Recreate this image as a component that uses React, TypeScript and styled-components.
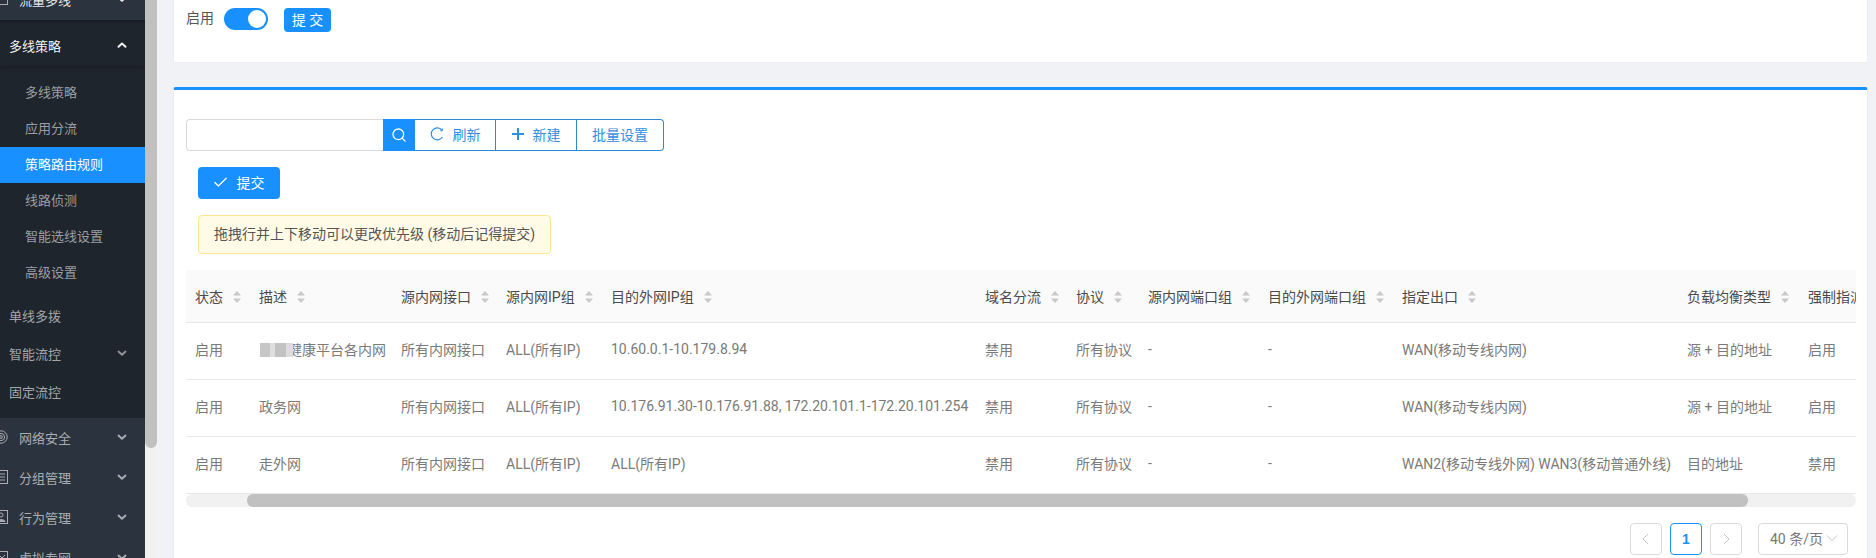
import React from "react";
import styled, { createGlobalStyle } from "styled-components";
import { Search, Check } from "lucide-react";

const Global = createGlobalStyle`
  html, body { margin: 0; padding: 0; height: 100%; overflow: hidden; background: #f0f2f5; }
  #root { height: 558px; overflow: hidden; }
  * { box-sizing: border-box; }
  body { font-family: Roboto, "Noto Sans CJK SC", sans-serif; font-size: 14px; color: #666; }
`;

const Page = styled.div`
  display: flex;
  width: 1876px;
  height: 558px;
  overflow: hidden;
`;

const Sidebar = styled.aside`
  width: 145px;
  flex: none;
  height: 558px;
  overflow: hidden;
  background: #2b333e;
  font-size: 13px;
  color: #a9acb0;
`;

const Nav = styled.nav`
  margin-top: -20px;
`;

const TopItem = styled.div<{ $white?: boolean }>`
  height: 40px;
  display: flex;
  align-items: center;
  padding: 0 18px 2px 0;
  color: ${(p) => (p.$white ? "#e6e7e9" : "#a9acb0")};
`;

const IconSlot = styled.span`
  width: 14px;
  height: 14px;
  margin-left: -6px;
  margin-right: 11px;
  flex: none;
  display: flex;
`;

const Label = styled.span`
  flex: 1;
  white-space: nowrap;
`;

const Expanded = styled.div`
  background: #1f252d;
  box-shadow: inset 0 3px 2px -1px #181c22;
  padding: 6px 0 7px;
`;

const GroupHeader = styled.div`
  height: 40px;
  display: flex;
  align-items: center;
  padding: 0 18px 2px 9px;
  color: #f2f2f2;
  box-shadow: 0 2px 3px rgba(0, 0, 0, 0.18);
`;

const SubList = styled.div`
  padding: 9px 0 6px;
`;

const SubItem = styled.div<{ $active?: boolean }>`
  height: 36px;
  display: flex;
  align-items: center;
  padding: 0 0 3px 25px;
  background: ${(p) => (p.$active ? "#1890ff" : "transparent")};
  color: ${(p) => (p.$active ? "#ffffff" : "#9b9ea2")};
`;

const PlainItem = styled.div`
  height: 38px;
  display: flex;
  align-items: center;
  padding: 0 18px 2px 9px;
  color: #a2a5a9;
`;

const SideTrack = styled.div`
  width: 12px;
  flex: none;
  height: 558px;
  background: #f1f1f1;
`;

const SideThumb = styled.div`
  height: 448px;
  background: #c1c1c1;
  border-radius: 0 0 6px 6px;
`;

const Main = styled.main`
  flex: 1;
  min-width: 0;
  padding: 0 8px 0 16px;
  background: #f0f2f5;
`;

const TopCard = styled.section`
  height: 63px;
  background: #fff;
  border: 1px solid #ebedf0;
  border-top: 0;
  padding: 7px 0 0 12px;
  display: flex;
  align-items: flex-start;
  margin-bottom: 24px;
`;

const FieldLabel = styled.span`
  line-height: 22px;
  margin-right: 10px;
  color: #555;
`;

const Switch = styled.span`
  width: 44px;
  height: 22px;
  margin-top: 1px;
  border-radius: 11px;
  background: #1890ff;
  display: flex;
  justify-content: flex-end;
  align-items: center;
  padding-right: 2px;
  margin-right: 16px;
`;

const Knob = styled.span`
  width: 18px;
  height: 18px;
  border-radius: 50%;
  background: #fff;
`;

const SmallPrimary = styled.button`
  width: 47px;
  height: 24px;
  margin-top: 1px;
  border: 0;
  padding: 0 0 2px;
  border-radius: 4px;
  background: #1890ff;
  color: #fff;
  font: inherit;
  white-space: pre;
`;

const Card = styled.section`
  height: 471px;
  background: #fff;
  border-top: 3px solid #1890ff;
  border-left: 1px solid #ebedf0;
  border-right: 1px solid #ebedf0;
  border-radius: 3px 3px 0 0;
  padding: 29px 11px 0 12px;
`;

const Toolbar = styled.div`
  display: flex;
  height: 32px;
`;

const SearchInput = styled.input`
  width: 197px;
  height: 32px;
  border: 1px solid #d9d9d9;
  border-right: 0;
  border-radius: 4px 0 0 4px;
  outline: none;
  padding: 0 8px;
  background: #fff;
`;

const SearchButton = styled.button`
  width: 32px;
  height: 32px;
  border: 0;
  padding: 0;
  background: #1890ff;
  color: #fff;
  display: flex;
  align-items: center;
  justify-content: center;
`;

const ToolButton = styled.button<{ $w: number; $last?: boolean }>`
  width: ${(p) => p.$w}px;
  height: 32px;
  background: #fff;
  border: 1px solid #2b8ad8;
  border-left: 0;
  border-radius: ${(p) => (p.$last ? "0 4px 4px 0" : "0")};
  color: #2f8fe0;
  font: inherit;
  padding: 0 0 2px;
  display: flex;
  align-items: center;
  justify-content: center;
  gap: 9px;
`;

const SubmitRow = styled.div`
  margin: 16px 0 0 12px;
`;

const SubmitButton = styled.button`
  width: 82px;
  height: 32px;
  background: #1890ff;
  border: 0;
  border-radius: 4px;
  color: #fff;
  font: inherit;
  padding: 0 2px 2px 0;
  display: flex;
  align-items: center;
  justify-content: center;
  gap: 8px;
`;

const Alert = styled.div`
  margin: 16px 0 16px 12px;
  width: 353px;
  height: 39px;
  background: #fffbe6;
  border: 1px solid #ffe58f;
  border-radius: 4px;
  padding: 0 0 3px 15px;
  display: flex;
  align-items: center;
  color: #555;
  white-space: nowrap;
`;

const TableWrap = styled.div`
  width: 1670px;
  overflow: hidden;
`;

const Table = styled.table`
  table-layout: fixed;
  width: 1733px;
  border-collapse: collapse;
`;

const HeadCell = styled.th`
  height: 52px;
  padding: 0 0 0 9px;
  background: #fafafa;
  border-bottom: 1px solid #e8e8e8;
  font-weight: 400;
  text-align: left;
  color: #4a4a4a;
  white-space: nowrap;
  overflow: hidden;
`;

const HeadInner = styled.span`
  display: inline-flex;
  align-items: center;
  gap: 10px;
`;

const SortMark = styled.svg`
  width: 8px;
  height: 12px;
  flex: none;
  margin-top: 2px;
`;

const Cell = styled.td`
  height: 57px;
  padding: 0 0 4px 9px;
  border-bottom: 1px solid #e8e8e8;
  color: #7a7a7a;
  white-space: nowrap;
  overflow: hidden;
`;

const Blur = styled.span`
  display: inline-block;
  width: 33px;
  height: 14px;
  margin: 0 -5px 0 1px;
  vertical-align: -2px;
  position: relative;
  z-index: 1;
  filter: blur(0.7px);
  background: linear-gradient(
    90deg,
    #c6c6c6 0 29%,
    #dedede 29% 46%,
    #c2c2c2 46% 78%,
    #dcdcdc 78% 100%
  );
`;

const HScroll = styled.div`
  width: 1670px;
  height: 13px;
  background: #f1f1f1;
  border-radius: 6px;
  padding-left: 61px;
`;

const HThumb = styled.div`
  width: 1501px;
  height: 13px;
  background: #c1c1c1;
  border-radius: 6px;
`;

const Pager = styled.div`
  display: flex;
  justify-content: flex-end;
  align-items: center;
  gap: 8px;
  margin-top: 16px;
  padding-right: 8px;
`;

const PageBtn = styled.div<{ $active?: boolean }>`
  width: 32px;
  height: 32px;
  border: 1px solid ${(p) => (p.$active ? "#1890ff" : "#d9d9d9")};
  border-radius: 4px;
  color: ${(p) => (p.$active ? "#1890ff" : "#c4c4c4")};
  display: flex;
  align-items: center;
  justify-content: center;
  font-family: "Liberation Sans", sans-serif;
  font-weight: 700;
  font-size: 14px;
`;

const PageSize = styled.div`
  width: 90px;
  height: 32px;
  margin-left: 8px;
  border: 1px solid #d9d9d9;
  border-radius: 4px;
  display: flex;
  align-items: center;
  justify-content: space-between;
  padding: 0 9px 2px 11px;
  color: #777;
  white-space: nowrap;
`;

const Chev = ({ up, color = "#a9acb0" }: { up?: boolean; color?: string }) => (
  <svg width="10" height="10" viewBox="0 0 10 10" fill="none" stroke={color} strokeWidth="2" strokeLinecap="round" strokeLinejoin="round">
    <path d={up ? "M1.5 6.8 5 3.6l3.5 3.2" : "M1.5 3.6 5 6.8l3.5-3.2"} />
  </svg>
);

const I = { fill: "none", stroke: "#a9acb0", strokeWidth: 1 };

const BoxIcon = () => (
  <svg width="14" height="14" viewBox="0 0 14 14" {...I}>
    <rect x="0.5" y="1.5" width="13" height="11" />
    <path d="M3 9.5 6 6l2 2 3-3" />
  </svg>
);
const ShieldIcon = () => (
  <svg width="14" height="14" viewBox="0 0 14 14" {...I}>
    <circle cx="7" cy="7" r="6.2" />
    <circle cx="7" cy="7" r="3.6" />
    <circle cx="7" cy="7" r="1.4" />
  </svg>
);
const ListIcon = () => (
  <svg width="14" height="14" viewBox="0 0 14 14" {...I}>
    <rect x="0.5" y="0.5" width="13" height="13" />
    <path d="M4 4h7M4 7h7M4 10h7" />
  </svg>
);
const BehaviorIcon = () => (
  <svg width="14" height="14" viewBox="0 0 14 14" {...I}>
    <rect x="0.5" y="0.5" width="13" height="13" />
    <circle cx="7" cy="5" r="2" />
    <path d="M3 11.5c0-2.5 8-2.5 8 0z" fill="#a9acb0" />
  </svg>
);

const Reload = () => (
  <svg width="14" height="14" viewBox="0 0 14 14" fill="none" stroke="#2f8fe0" strokeWidth="1.2">
    <path d="M12 3.2A6 6 0 1 0 12.4 10" />
    <path d="M12.4 1.6v2.2h-2.2" strokeWidth="1" />
  </svg>
);

const Plus = () => (
  <svg width="12" height="12" viewBox="0 0 12 12" stroke="#2f8fe0" strokeWidth="2">
    <path d="M6 0v12M0 6h12" />
  </svg>
);

const Sort = () => (
  <SortMark viewBox="0 0 8 12">
    <path d="M4 0 8 4.5H0z M0 7.5h8L4 12z" fill="#c8c8c8" />
  </SortMark>
);

const Pagechev = ({ dir }: { dir: "l" | "r" | "d" }) => (
  <svg width="12" height="12" viewBox="0 0 12 12" fill="none" stroke="#c4c4c4" strokeWidth="1">
    <path d={dir === "l" ? "M8 1 3 6l5 5" : dir === "r" ? "M4 1l5 5-5 5" : "M1 3.5l5 5 5-5"} />
  </svg>
);

const widths = [64, 142, 105, 105, 374, 91, 72, 120, 134, 285, 121, 120];
const heads = ["状态", "描述", "源内网接口", "源内网IP组", "目的外网IP组", "域名分流", "协议", "源内网端口组", "目的外网端口组", "指定出口", "负载均衡类型", "强制指派"];

const rows: { key: string; desc: React.ReactNode; dst: string; out: string; lb: string; force: string }[] = [
  { key: "a", desc: <><Blur />健康平台各内网</>, dst: "10.60.0.1-10.179.8.94", out: "WAN(移动专线内网)", lb: "源 + 目的地址", force: "启用" },
  { key: "b", desc: "政务网", dst: "10.176.91.30-10.176.91.88, 172.20.101.1-172.20.101.254", out: "WAN(移动专线内网)", lb: "源 + 目的地址", force: "启用" },
  { key: "c", desc: "走外网", dst: "ALL(所有IP)", out: "WAN2(移动专线外网) WAN3(移动普通外线)", lb: "目的地址", force: "禁用" },
];

export default function App() {
  return (
    <Page>
      <Global />
      <Sidebar>
        <Nav>
          <TopItem $white>
            <IconSlot><BoxIcon /></IconSlot>
            <Label>流量多线</Label>
            <Chev color="#e6e7e9" />
          </TopItem>
          <Expanded>
            <GroupHeader>
              <Label>多线策略</Label>
              <Chev up color="#f2f2f2" />
            </GroupHeader>
            <SubList>
              <SubItem>多线策略</SubItem>
              <SubItem>应用分流</SubItem>
              <SubItem $active>策略路由规则</SubItem>
              <SubItem>线路侦测</SubItem>
              <SubItem>智能选线设置</SubItem>
              <SubItem>高级设置</SubItem>
            </SubList>
            <PlainItem><Label>单线多拨</Label></PlainItem>
            <PlainItem><Label>智能流控</Label><Chev color="#8f9297" /></PlainItem>
            <PlainItem><Label>固定流控</Label></PlainItem>
          </Expanded>
          <TopItem>
            <IconSlot><ShieldIcon /></IconSlot>
            <Label>网络安全</Label>
            <Chev />
          </TopItem>
          <TopItem>
            <IconSlot><ListIcon /></IconSlot>
            <Label>分组管理</Label>
            <Chev />
          </TopItem>
          <TopItem>
            <IconSlot><BehaviorIcon /></IconSlot>
            <Label>行为管理</Label>
            <Chev />
          </TopItem>
          <TopItem>
            <IconSlot><BoxIcon /></IconSlot>
            <Label>虚拟专网</Label>
            <Chev />
          </TopItem>
        </Nav>
      </Sidebar>
      <SideTrack><SideThumb /></SideTrack>
      <Main>
        <TopCard>
          <FieldLabel>启用</FieldLabel>
          <Switch><Knob /></Switch>
          <SmallPrimary>提 交</SmallPrimary>
        </TopCard>
        <Card>
          <Toolbar>
            <SearchInput />
            <SearchButton><Search size={16} strokeWidth={1.9} /></SearchButton>
            <ToolButton $w={81}><Reload />刷新</ToolButton>
            <ToolButton $w={81}><Plus />新建</ToolButton>
            <ToolButton $w={87} $last>批量设置</ToolButton>
          </Toolbar>
          <SubmitRow>
            <SubmitButton><Check size={17} strokeWidth={1.7} />提交</SubmitButton>
          </SubmitRow>
          <Alert>拖拽行并上下移动可以更改优先级 (移动后记得提交)</Alert>
          <TableWrap>
            <Table>
              <colgroup>
                {widths.map((w, i) => <col key={i} width={w} />)}
              </colgroup>
              <thead>
                <tr>
                  {heads.map((h, i) => (
                    <HeadCell key={h}>
                      <HeadInner>{h}{i < 11 && <Sort />}</HeadInner>
                    </HeadCell>
                  ))}
                </tr>
              </thead>
              <tbody>
                {rows.map((r) => (
                  <tr key={r.key}>
                    <Cell>启用</Cell>
                    <Cell>{r.desc}</Cell>
                    <Cell>所有内网接口</Cell>
                    <Cell>ALL(所有IP)</Cell>
                    <Cell>{r.dst}</Cell>
                    <Cell>禁用</Cell>
                    <Cell>所有协议</Cell>
                    <Cell>-</Cell>
                    <Cell>-</Cell>
                    <Cell>{r.out}</Cell>
                    <Cell>{r.lb}</Cell>
                    <Cell>{r.force}</Cell>
                  </tr>
                ))}
              </tbody>
            </Table>
          </TableWrap>
          <HScroll><HThumb /></HScroll>
          <Pager>
            <PageBtn><Pagechev dir="l" /></PageBtn>
            <PageBtn $active>1</PageBtn>
            <PageBtn><Pagechev dir="r" /></PageBtn>
            <PageSize>40 条/页<Pagechev dir="d" /></PageSize>
          </Pager>
        </Card>
      </Main>
    </Page>
  );
}
